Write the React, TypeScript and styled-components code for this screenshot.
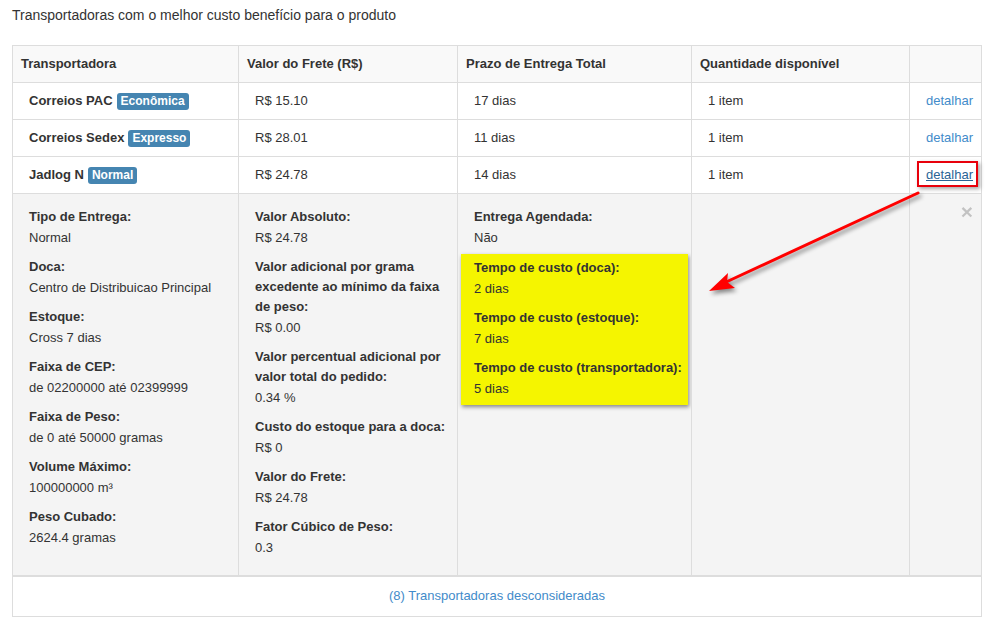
import styled, { createGlobalStyle } from 'styled-components';

const GlobalStyle = createGlobalStyle`
    body {
        margin: 0;
        background: #fff;
        font-family: "Liberation Sans", Arial, sans-serif;
        font-size: 13px;
        line-height: 20px;
        color: #333;
    }
`;

const Page = styled.div`
    position: relative;
    padding: 5px 17px 14px 12px;
`;

const Intro = styled.p`
    margin: 0 0 20px;
    font-size: 14px;
`;

const Table = styled.table`
    width: 970px;
    table-layout: fixed;
    border-collapse: collapse;
    border: 1px solid #ddd;
`;

const HeadCell = styled.th`
    text-align: left;
    font-weight: bold;
    padding: 8px;
    background: #f9f9f9;
    border: 1px solid #ddd;
`;

const Cell = styled.td<{ $right?: boolean; $bold?: boolean }>`
    padding: 8px 8px 8px 16px;
    border: 1px solid #ddd;
    text-align: ${(p) => (p.$right ? 'right' : 'left')};
    font-weight: ${(p) => (p.$bold ? 'bold' : 'normal')};
    white-space: nowrap;
`;

const Badge = styled.span`
    display: inline-block;
    margin-left: 4px;
    padding: 0 4px;
    height: 17px;
    line-height: 17px;
    border-radius: 3px;
    background: #4585b1;
    color: #fff;
    font-size: 12px;
    font-weight: bold;
`;

const DetailLink = styled.a<{ $active?: boolean }>`
    position: relative;
    color: ${(p) => (p.$active ? '#2a6496' : '#428bca')};
    text-decoration: ${(p) => (p.$active ? 'underline' : 'none')};
    cursor: pointer;
    &::after {
        content: '';
        display: ${(p) => (p.$active ? 'block' : 'none')};
        position: absolute;
        left: -9px;
        right: -5px;
        top: -6px;
        bottom: -5px;
        border: 2px solid #e8000b;
        box-shadow: 2px 2px 4px rgba(0, 0, 0, 0.35);
    }
`;

const DetailCell = styled.td`
    vertical-align: top;
    background: #f4f4f4;
    border: 1px solid #ddd;
    padding: 13px 8px 8px 16px;
`;

const Pair = styled.div`
    margin-bottom: 10px;
`;

const Label = styled.div`
    font-weight: bold;
`;

const Value = styled.div`
    padding-top: 1px;
    margin-bottom: -1px;
`;

const Highlight = styled.div`
    margin: -4px -5px 0 -13px;
    padding: 4px 5px 7px 13px;
    background: #f5f500;
    box-shadow: 1px 2px 4px rgba(0, 0, 0, 0.45);
    & > div:last-child {
        margin-bottom: 0;
    }
`;

const Close = styled.span`
    float: right;
    margin-top: -6px;
    font-size: 21px;
    font-weight: bold;
    line-height: 1;
    color: #000;
    opacity: 0.2;
`;

const FooterCell = styled.td`
    text-align: center;
    padding: 9px 8px 10px;
    border: 1px solid #ddd;
    border-top: 2px solid #ddd;
`;

const FooterLink = styled.a`
    color: #428bca;
    text-decoration: none;
`;

const Arrow = styled.svg`
    position: absolute;
    left: 700px;
    top: 185px;
    overflow: visible;
    pointer-events: none;
    filter: drop-shadow(2px 3px 2px rgba(0, 0, 0, 0.45));
`;

type Carrier = { name: string; tag: string; price: string; days: string; qty: string };

const carriers: Carrier[] = [
    { name: 'Correios PAC', tag: 'Econômica', price: 'R$ 15.10', days: '17 dias', qty: '1 item' },
    { name: 'Correios Sedex', tag: 'Expresso', price: 'R$ 28.01', days: '11 dias', qty: '1 item' },
    { name: 'Jadlog N', tag: 'Normal', price: 'R$ 24.78', days: '14 dias', qty: '1 item' },
];

const colOne = [
    ['Tipo de Entrega:', 'Normal'],
    ['Doca:', 'Centro de Distribuicao Principal'],
    ['Estoque:', 'Cross 7 dias'],
    ['Faixa de CEP:', 'de 02200000 até 02399999'],
    ['Faixa de Peso:', 'de 0 até 50000 gramas'],
    ['Volume Máximo:', '100000000 m³'],
    ['Peso Cubado:', '2624.4 gramas'],
];

const colTwo = [
    ['Valor Absoluto:', 'R$ 24.78'],
    ['Valor adicional por grama excedente ao mínimo da faixa de peso:', 'R$ 0.00'],
    ['Valor percentual adicional por valor total do pedido:', '0.34 %'],
    ['Custo do estoque para a doca:', 'R$ 0'],
    ['Valor do Frete:', 'R$ 24.78'],
    ['Fator Cúbico de Peso:', '0.3'],
];

const timing = [
    ['Tempo de custo (doca):', '2 dias'],
    ['Tempo de custo (estoque):', '7 dias'],
    ['Tempo de custo (transportadora):', '5 dias'],
];

const renderPairs = (list: string[][]) =>
    list.map(([label, value]) => (
        <Pair key={label}>
            <Label>{label}</Label>
            <Value>{value}</Value>
        </Pair>
    ));

const App = () => {
    return (
        <Page>
            <GlobalStyle />
            <Intro>Transportadoras com o melhor custo benefício para o produto</Intro>
            <Table>
                <colgroup>
                    <col style={{ width: 226 }} />
                    <col style={{ width: 219 }} />
                    <col style={{ width: 234 }} />
                    <col style={{ width: 218 }} />
                    <col style={{ width: 72 }} />
                </colgroup>
                <thead>
                    <tr>
                        <HeadCell>Transportadora</HeadCell>
                        <HeadCell>Valor do Frete (R$)</HeadCell>
                        <HeadCell>Prazo de Entrega Total</HeadCell>
                        <HeadCell>Quantidade disponível</HeadCell>
                        <HeadCell></HeadCell>
                    </tr>
                </thead>
                <tbody>
                    {carriers.map((c, i) => (
                        <tr key={c.name}>
                            <Cell $bold>
                                {c.name}
                                <Badge>{c.tag}</Badge>
                            </Cell>
                            <Cell>{c.price}</Cell>
                            <Cell>{c.days}</Cell>
                            <Cell>{c.qty}</Cell>
                            <Cell $right>
                                <DetailLink $active={i === 2}>detalhar</DetailLink>
                            </Cell>
                        </tr>
                    ))}
                    <tr>
                        <DetailCell>{renderPairs(colOne)}</DetailCell>
                        <DetailCell>{renderPairs(colTwo)}</DetailCell>
                        <DetailCell>
                            {renderPairs([['Entrega Agendada:', 'Não']])}
                            <Highlight>{renderPairs(timing)}</Highlight>
                        </DetailCell>
                        <DetailCell></DetailCell>
                        <DetailCell>
                            <Close>×</Close>
                        </DetailCell>
                    </tr>
                </tbody>
                <tbody>
                    <tr>
                        <FooterCell colSpan={5}>
                            <FooterLink>(8) Transportadoras desconsideradas</FooterLink>
                        </FooterCell>
                    </tr>
                </tbody>
            </Table>
            <Arrow width="230" height="115" viewBox="0 0 230 115">
                <line x1="218" y1="8" x2="24" y2="98" stroke="#f00" strokeWidth="3" strokeLinecap="round" />
                <polygon points="9,106 28,88 27,97 35,103" fill="#f00" />
            </Arrow>
        </Page>
    );
};

export default App;
